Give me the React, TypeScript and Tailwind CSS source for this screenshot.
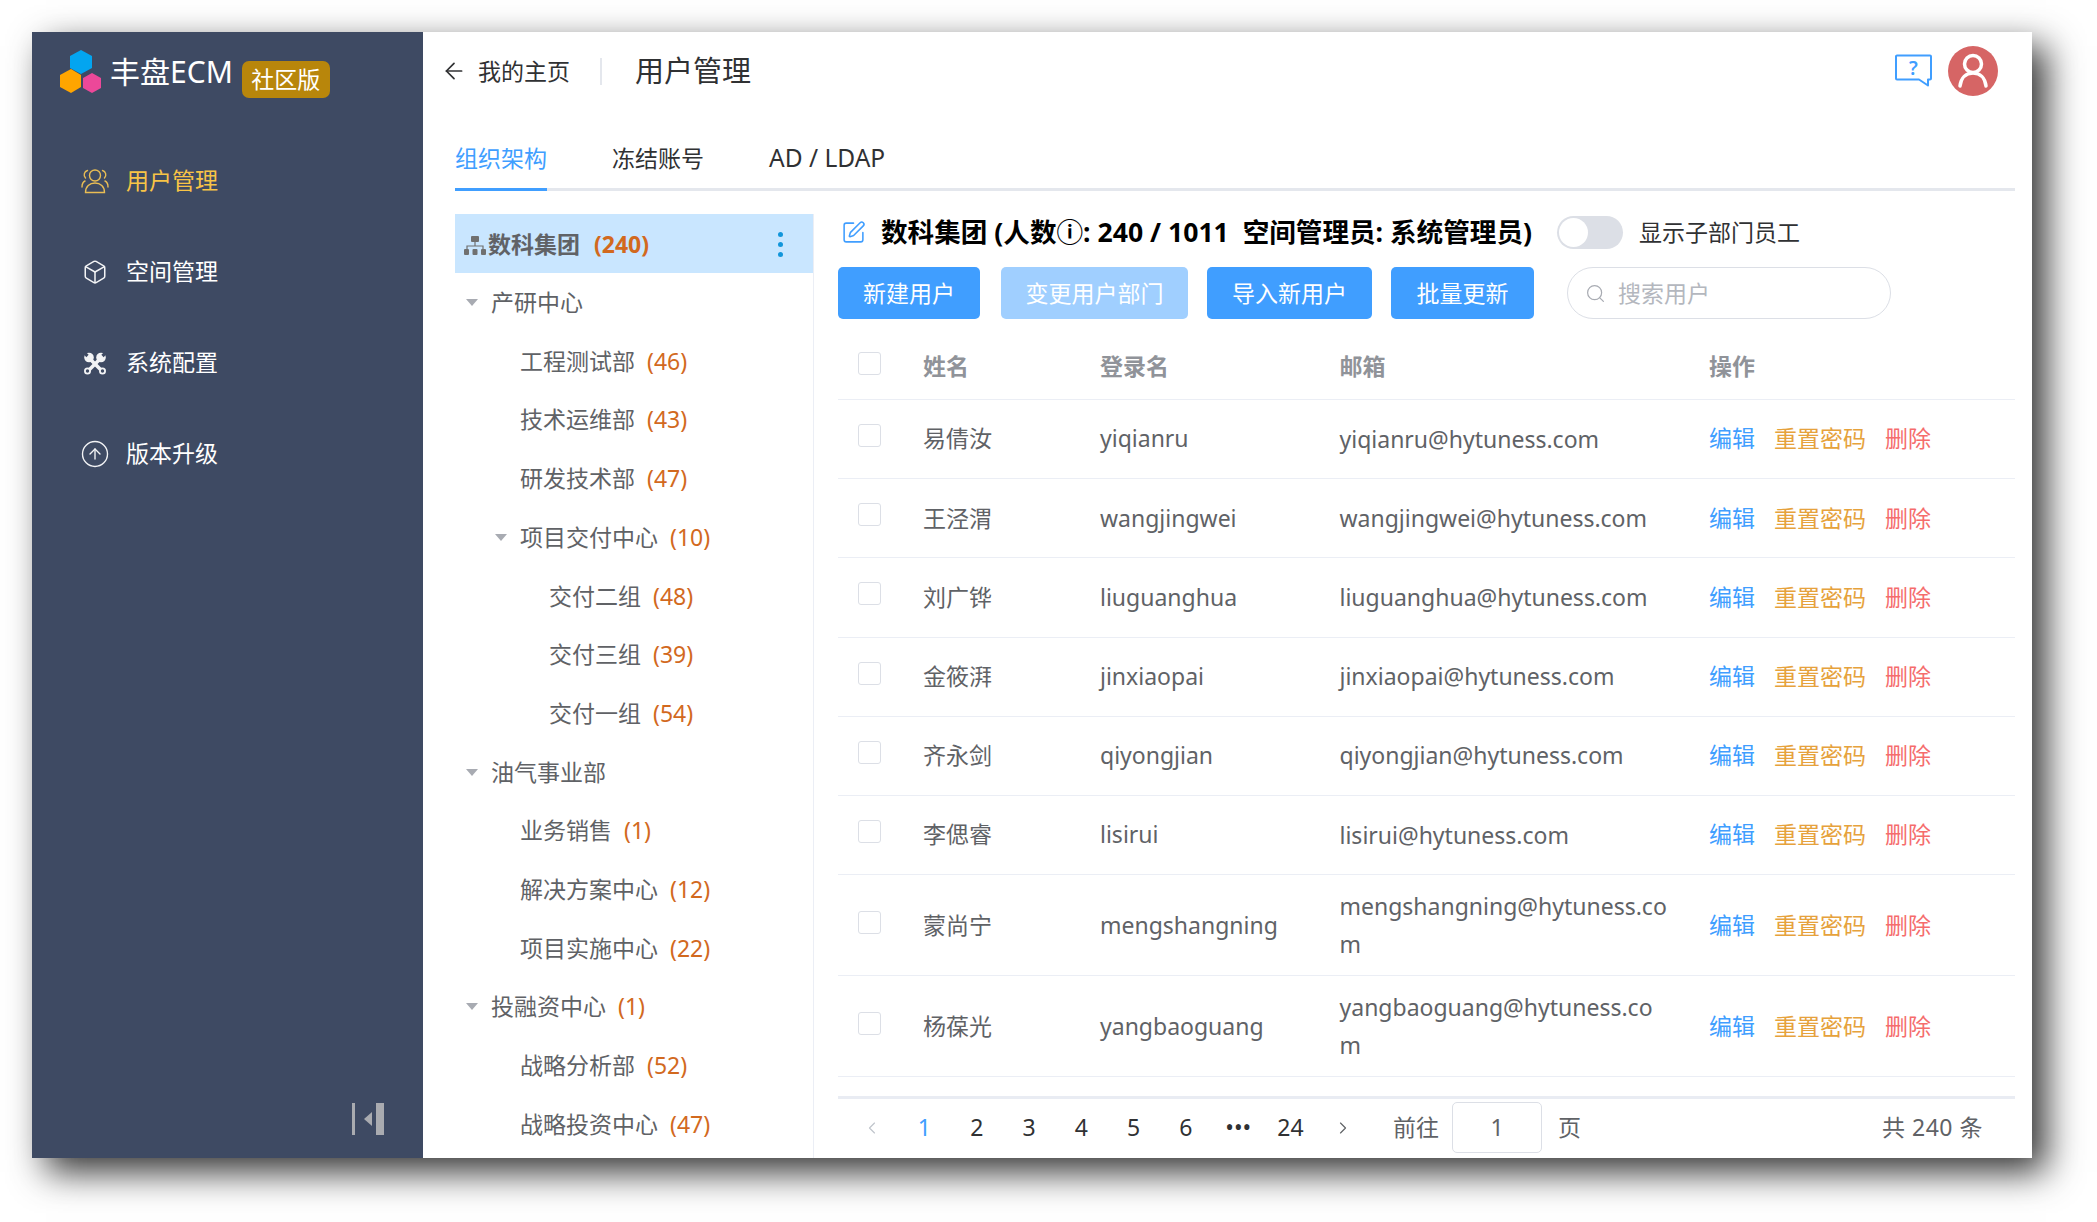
import { ArrowLeft, Box, ChevronLeft, ChevronRight, CircleArrowUp, Search, SquarePen } from 'lucide-react'

const menu = [
  { label: '用户管理', icon: 'users', active: true },
  { label: '空间管理', icon: 'box' },
  { label: '系统配置', icon: 'tools' },
  { label: '版本升级', icon: 'up' },
]

const tree: { name: string; count?: number; level: number; caret?: boolean }[] = [
  { name: '产研中心', level: 1, caret: true },
  { name: '工程测试部', count: 46, level: 2 },
  { name: '技术运维部', count: 43, level: 2 },
  { name: '研发技术部', count: 47, level: 2 },
  { name: '项目交付中心', count: 10, level: 2, caret: true },
  { name: '交付二组', count: 48, level: 3 },
  { name: '交付三组', count: 39, level: 3 },
  { name: '交付一组', count: 54, level: 3 },
  { name: '油气事业部', level: 1, caret: true },
  { name: '业务销售', count: 1, level: 2 },
  { name: '解决方案中心', count: 12, level: 2 },
  { name: '项目实施中心', count: 22, level: 2 },
  { name: '投融资中心', count: 1, level: 1, caret: true },
  { name: '战略分析部', count: 52, level: 2 },
  { name: '战略投资中心', count: 47, level: 2 },
]

const users = [
  { name: '易倩汝', login: 'yiqianru' },
  { name: '王泾渭', login: 'wangjingwei' },
  { name: '刘广铧', login: 'liuguanghua' },
  { name: '金筱湃', login: 'jinxiaopai' },
  { name: '齐永剑', login: 'qiyongjian' },
  { name: '李偲睿', login: 'lisirui' },
  { name: '蒙尚宁', login: 'mengshangning', tall: true },
  { name: '杨葆光', login: 'yangbaoguang', tall: true },
]

const pages = ['1', '2', '3', '4', '5', '6', '•••', '24']

function Logo() {
  return (
    <svg width="42" height="44" viewBox="0 0 42 44" className="shrink-0">
      <polygon points="21,0 32,6 32,18 21,24 10,18 10,6" fill="#03a5f0" />
      <polygon points="11,19 21,25 21,37 11,43 0,37 0,25" fill="#ffa500" />
      <polygon points="32,23 41,28 41,38 32,43 23,38 23,28" fill="#ec4899" />
    </svg>
  )
}

function MenuIcon({ name, color }: { name: string; color: string }) {
  if (name === 'box') return <Box size={26} strokeWidth={1.4} color={color} />
  if (name === 'up') return <CircleArrowUp size={30} strokeWidth={1.1} color={color} />
  if (name === 'tools') {
    return (
      <svg width="24" height="24" viewBox="0 0 24 24" fill="none" stroke={color} strokeLinecap="round">
        <path d="M5 20 17.500 7.500" strokeWidth="3.600" />
        <path d="M19 20 6.500 7.500" strokeWidth="3.600" />
        <circle cx="18" cy="6.500" r="4.800" fill={color} stroke="none" />
        <circle cx="6" cy="6.500" r="4.800" fill={color} stroke="none" />
        <path d="M19.500 5 23 1.500" stroke="#3e4a63" strokeWidth="3.200" strokeLinecap="butt" />
        <path d="M4.500 5 1 1.500" stroke="#3e4a63" strokeWidth="3.200" strokeLinecap="butt" />
        <circle cx="4.500" cy="20" r="2.600" strokeWidth="1.800" fill="#3e4a63" />
        <circle cx="19.500" cy="20" r="2.600" strokeWidth="1.800" fill="#3e4a63" />
      </svg>
    )
  }
  return (
    <svg width="30" height="26" viewBox="0 0 30 26" fill="none" stroke={color} strokeWidth="1.4" strokeLinecap="round">
      <circle cx="15" cy="7.500" r="5.500" />
      <path d="M5.500 24.500c0-6 4-9.500 9.500-9.500s9.500 3.500 9.500 9.500z" />
      <path d="M7.500 2.500a4.500 4.500 0 0 0-2 7.500M2 19c0-3 1-5 3-6" />
      <path d="M22.500 2.500a4.500 4.500 0 0 1 2 7.500M28 19c0-3-1-5-3-6" />
    </svg>
  )
}

function Sidebar() {
  return (
    <aside className="w-[391px] shrink-0 bg-[#3e4a63] flex flex-col relative">
      <div className="flex items-start pl-[28px] pt-[18px] h-[103px]">
        <Logo />
        <span className="ml-[8px] mt-[1px] text-[30px] leading-[42px] text-white">丰盘ECM</span>
        <span className="ml-[9px] mt-[11px] w-[88px] h-[37px] rounded-[7px] bg-[#b8860b] text-white text-[23px] leading-[37px] text-center">社区版</span>
      </div>
      <nav className="flex flex-col">
        {menu.map(m => (
          <div key={m.label} className="h-[91px] flex items-center pl-[48px]">
            <span className="w-[30px] flex justify-center">
              <MenuIcon name={m.icon} color={m.active ? '#e9bd54' : '#f2f3f5'} />
            </span>
            <span className={m.active ? 'ml-[16px] text-[23px] text-[#f8c446]' : 'ml-[16px] text-[23px] text-white'}>{m.label}</span>
          </div>
        ))}
      </nav>
      <div className="mt-auto mb-[23px] mr-[39px] self-end flex items-center h-[32px]">
        <span className="w-[3px] h-[32px] bg-[#a9abb0]" />
        <span className="ml-[9px] w-0 h-0 border-y-[7px] border-y-transparent border-r-[8px] border-r-[#a9abb0]" />
        <span className="ml-[4px] w-[8px] h-[32px] bg-[#a9abb0]" />
      </div>
    </aside>
  )
}

function TreeRow({ node }: { node: (typeof tree)[0] }) {
  const pad = node.level === 1 ? 'pl-[36px]' : node.level === 2 ? 'pl-[65px]' : 'pl-[94px]'
  return (
    <div className={`h-[58.7px] shrink-0 flex items-center relative text-[23px] text-[#606266] ${pad}`}>
      {node.caret && (
        <span className={`absolute ${node.level === 1 ? 'left-[11px]' : 'left-[40px]'} top-[26px] w-0 h-0 border-x-[6px] border-x-transparent border-t-[7px] border-t-[#a8abb2]`} />
      )}
      <span>{node.name}</span>
      {node.count !== undefined && <span className="ml-[12px] text-[#d2691e]">({node.count})</span>}
    </div>
  )
}

function Tree() {
  return (
    <div className="w-[359px] shrink-0 flex flex-col border-r border-[#ebeef5] overflow-hidden">
      <div className="h-[59px] shrink-0 bg-[#c9e6ff] flex items-center pl-[8px] pr-[30px] pt-[2px] text-[23px] font-bold text-[#606266]">
        <svg width="24" height="22" viewBox="0 0 24 22" fill="#707070" className="shrink-0">
          <rect x="8" y="2" width="8" height="6" rx="1" />
          <path d="M12 8v4M4 15v-3h16v3" fill="none" stroke="#707070" strokeWidth="1.200" />
          <rect x="1" y="15" width="5" height="6" rx="1" />
          <rect x="9.500" y="15" width="5" height="6" rx="1" />
          <rect x="18" y="15" width="5" height="6" rx="1" />
        </svg>
        <span className="ml-[1px]">数科集团</span>
        <span className="ml-[14px] text-[#d2691e]">(240)</span>
        <span className="ml-auto flex flex-col gap-[5px]">
          <span className="w-[5px] h-[5px] rounded-full bg-[#1296db]" />
          <span className="w-[5px] h-[5px] rounded-full bg-[#1296db]" />
          <span className="w-[5px] h-[5px] rounded-full bg-[#1296db]" />
        </span>
      </div>
      {tree.map(n => <TreeRow key={n.name} node={n} />)}
    </div>
  )
}

function Checkbox() {
  return <span className="block w-[23px] h-[23px] rounded-[3px] border border-[#dcdfe6] bg-white mb-[6px]" />
}

function UserRow({ user }: { user: (typeof users)[0] }) {
  return (
    <div className={`flex items-center border-b border-[#ebeef5] text-[23px] text-[#606266] ${user.tall ? 'h-[101px]' : 'h-[79.2px] pb-[1px]'}`}>
      <div className="w-[85px] pl-[20px]"><Checkbox /></div>
      <div className="w-[177px]">{user.name}</div>
      <div className="w-[239.500px]">{user.login}</div>
      <div className="w-[369.500px]">
        <div className="w-[332px] break-all leading-[38px]">{user.login}@hytuness.com</div>
      </div>
      <div className="flex gap-[19px]">
        <span className="text-[#409eff]">编辑</span>
        <span className="text-[#e6a23c]">重置密码</span>
        <span className="text-[#f56c6c]">删除</span>
      </div>
    </div>
  )
}

function Pagination() {
  return (
    <div className="mt-[19px] border-t-[3px] border-[#e9ecf3] flex items-center h-[60px] pl-[8px] text-[23px] text-[#303133]">
      <span className="w-[52.300px] flex justify-center"><ChevronLeft size={20} strokeWidth={1.4} color="#c0c4cc" /></span>
      {pages.map(p => (
        <span key={p} className={p === '1' ? 'w-[52.300px] text-center text-[#409eff]' : 'w-[52.300px] text-center'}>{p}</span>
      ))}
      <span className="w-[52.300px] flex justify-center"><ChevronRight size={20} strokeWidth={1.4} color="#606266" /></span>
      <span className="ml-[24px] text-[#606266]">前往</span>
      <span className="ml-[13px] w-[90px] h-[51px] rounded-[5px] border border-[#dcdfe6] text-[#606266] flex items-center justify-center">1</span>
      <span className="ml-[16px] text-[#606266]">页</span>
      <span className="ml-auto mr-[32px] text-[#606266] tracking-[0.5px]">共 240 条</span>
    </div>
  )
}

function Users() {
  return (
    <div className="flex-1 min-w-0 pl-[24px] flex flex-col">
      <div className="mt-[2px] h-[33px] flex items-center">
        <SquarePen size={25} strokeWidth={1.5} color="#409eff" className="ml-[3px]" />
        <span className="ml-[15px] text-[26.6px] font-bold text-[#000] whitespace-nowrap">数科集团 (人数ⓘ: 240 / 1011&nbsp; 空间管理员: 系统管理员)</span>
        <span className="ml-[25px] w-[66px] h-[33px] rounded-full bg-[#dcdfe6] p-[2px] shrink-0">
          <span className="block w-[29px] h-[29px] rounded-full bg-white" />
        </span>
        <span className="ml-[16px] text-[23px] text-[#303133] whitespace-nowrap">显示子部门员工</span>
      </div>
      <div className="mt-[18px] flex items-center text-[23px] text-white">
        <button className="w-[142px] h-[52px] rounded-[5px] bg-[#409eff]">新建用户</button>
        <button className="ml-[21px] w-[187px] h-[52px] rounded-[5px] bg-[#a0cfff]">变更用户部门</button>
        <button className="ml-[19px] w-[165px] h-[52px] rounded-[5px] bg-[#409eff]">导入新用户</button>
        <button className="ml-[19px] w-[143px] h-[52px] rounded-[5px] bg-[#409eff]">批量更新</button>
        <div className="ml-[33px] w-[324px] h-[52px] rounded-full border border-[#dcdfe6] flex items-center pl-[17px] text-[#b4b7be]">
          <Search size={21} strokeWidth={1.4} color="#a8abb2" />
          <span className="ml-[12px]">搜索用户</span>
        </div>
      </div>
      <div className="mt-[15px] h-[66px] flex items-center border-b border-[#ebeef5] text-[23px] font-bold text-[#909399]">
        <div className="w-[85px] pl-[20px]"><Checkbox /></div>
        <div className="w-[177px]">姓名</div>
        <div className="w-[239.500px]">登录名</div>
        <div className="w-[369.500px]">邮箱</div>
        <div>操作</div>
      </div>
      {users.map(u => <UserRow key={u.login} user={u} />)}
      <Pagination />
    </div>
  )
}

export default function App() {
  return (
    <div className="w-[2097px] h-[1222px] overflow-hidden bg-white pt-[32px] pl-[32px] font-['Noto_Sans','Noto_Sans_CJK_SC',sans-serif]">
      <div className="w-[2000px] h-[1126px] flex bg-white shadow-[14px_14px_34px_rgba(0,0,0,0.8)]">
        <Sidebar />
        <main className="flex-1 min-w-0 flex flex-col pl-[32px] pr-[17px]">
          <header className="h-[78px] shrink-0 flex items-center relative">
            <ArrowLeft size={26} strokeWidth={1.6} color="#303133" className="ml-[-14px]" />
            <span className="ml-[11px] text-[23px] text-[#303133]">我的主页</span>
            <span className="ml-[30px] w-[2px] h-[27px] bg-[#e4e7ed]" />
            <span className="ml-[33px] text-[29px] text-[#303133]">用户管理</span>
            <svg width="38" height="34" viewBox="0 0 38 34" fill="none" className="ml-auto mr-[15px]">
              <path d="M2 1.500h33a1 1 0 0 1 1 1v22a1 1 0 0 1-1 1h-2v6l-9-6H2a1 1 0 0 1-1-1v-22a1 1 0 0 1 1-1z" stroke="#409eff" strokeWidth="2" strokeLinejoin="round" />
              <text x="18.500" y="21" fontSize="19" fontWeight="600" textAnchor="middle" fill="#409eff">?</text>
            </svg>
            <span className="mr-[17px] w-[50px] h-[50px] rounded-full bg-[#d66565] flex items-center justify-center">
              <svg width="32" height="36" viewBox="0 0 32 36" fill="none" stroke="#fff" strokeWidth="3.500" strokeLinecap="round">
                <circle cx="16" cy="11" r="8.500" />
                <path d="M3 33c1-8 6-13 13-13s12 5 13 13" />
              </svg>
            </span>
          </header>
          <div className="h-[81px] shrink-0 flex items-end border-b-[3px] border-[#e4e7ed] text-[23px] text-[#303133]">
            <span className="h-[63px] w-[92px] leading-[60px] border-b-[3px] mb-[-3px] border-[#409eff] text-[#409eff] whitespace-nowrap">组织架构</span>
            <span className="h-[63px] ml-[65px] leading-[66px]">冻结账号</span>
            <span className="h-[63px] ml-[65px] leading-[66px] text-[24.500px]">AD / LDAP</span>
          </div>
          <div className="flex-1 min-h-0 mt-[23px] flex">
            <Tree />
            <Users />
          </div>
        </main>
      </div>
    </div>
  )
}
